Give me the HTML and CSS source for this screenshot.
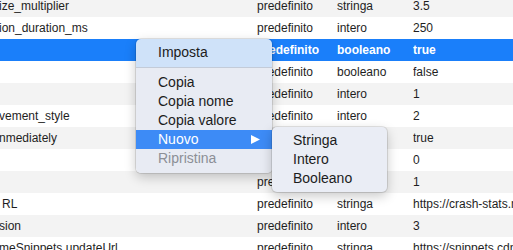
FILE: index.html
```html
<!DOCTYPE html>
<html lang="it">
<head>
<meta charset="utf-8">
<link rel="stylesheet" href="styles.css">
</head>
<body>
<div class="table">
  <div class="row alt"><span class="name">ize_multiplier</span><span>predefinito</span><span>stringa</span><span>3.5</span></div>
  <div class="row"><span class="name">ion_duration_ms</span><span>predefinito</span><span>intero</span><span>250</span></div>
  <div class="row selected"><span class="name"></span><span>predefinito</span><span>booleano</span><span>true</span></div>
  <div class="row"><span class="name"></span><span>predefinito</span><span>booleano</span><span>false</span></div>
  <div class="row alt"><span class="name"></span><span>predefinito</span><span>intero</span><span>1</span></div>
  <div class="row"><span class="name">vement_style</span><span>predefinito</span><span>intero</span><span>2</span></div>
  <div class="row alt"><span class="name">nmediately</span><span>predefinito</span><span>booleano</span><span>true</span></div>
  <div class="row"><span class="name"></span><span>predefinito</span><span>intero</span><span>0</span></div>
  <div class="row alt"><span class="name"></span><span>predefinito</span><span>intero</span><span>1</span></div>
  <div class="row"><span class="name indent">RL</span><span>predefinito</span><span>stringa</span><span>https://crash-stats.mozilla.com</span></div>
  <div class="row alt"><span class="name">sion</span><span>predefinito</span><span>intero</span><span>3</span></div>
  <div class="row"><span class="name">meSnippets.updateUrl</span><span>predefinito</span><span>stringa</span><span>https://snippets.cdn.mozilla.net</span></div>
</div>

<div class="menu main-menu">
  <div class="item">Imposta</div>
  <div class="sep"></div>
  <div class="item">Copia</div>
  <div class="item">Copia nome</div>
  <div class="item">Copia valore</div>
  <div class="item active">Nuovo<svg class="arrow" width="9" height="9" viewBox="0 0 9 9"><path d="M0 0 L9 4.5 L0 9 Z" fill="#fff"/></svg></div>
  <div class="item disabled">Ripristina</div>
</div>

<div class="menu sub-menu">
  <div class="item">Stringa</div>
  <div class="item">Intero</div>
  <div class="item">Booleano</div>
</div>
</body>
</html>
```

FILE: styles.css
```css
html, body {
  margin: 0;
  padding: 0;
  background: #fff;
  overflow: hidden;
}
body {
  width: 513px;
  height: 250px;
  position: relative;
  font-family: "Liberation Sans", Arial, sans-serif;
  color: #1e1e1e;
}
.table {
  margin-top: -5px;
}
.row {
  display: grid;
  grid-template-columns: 257px 80px 76px 1fr;
  height: 22px;
  line-height: 22px;
  font-size: 12px;
  white-space: nowrap;
  overflow: hidden;
}
.row span {
  overflow: hidden;
}
.row.alt {
  background: #f3f3f3;
}
.row.selected {
  background: #1a7ffa;
  color: #fff;
  font-weight: bold;
}
.name {
  margin-left: -1px;
}
.name.indent {
  margin-left: 2px;
}
.menu {
  position: absolute;
  background: #e8ebf3;
  border-radius: 5px;
  box-shadow: 0 0 0 1px rgba(0,0,0,0.10), 0 4px 12px rgba(0,0,0,0.22);
  font-size: 14px;
  color: #1c1c1c;
  overflow: hidden;
}
.main-menu {
  left: 136px;
  top: 39px;
  width: 136px;
  padding: 4px 0 4.5px;
  background: linear-gradient(#cfe2f9 0, #cfe2f9 28px, #e8ebf3 29px);
}
.sub-menu {
  left: 272px;
  top: 127px;
  width: 115px;
  padding: 4px 0;
  background: #eaedf5;
}
.item {
  height: 19px;
  line-height: 19px;
  padding-left: 22px;
  position: relative;
}
.sub-menu .item {
  padding-left: 21px;
}
.item.active {
  background: #3d8bf6;
  color: #fff;
}
.item.disabled {
  color: #8c8f96;
}
.arrow {
  position: absolute;
  left: 115px;
  top: 5px;
}
.sep {
  height: 1px;
  margin: 5px 0 5px;
  background: #c3cbd8;
}
```
